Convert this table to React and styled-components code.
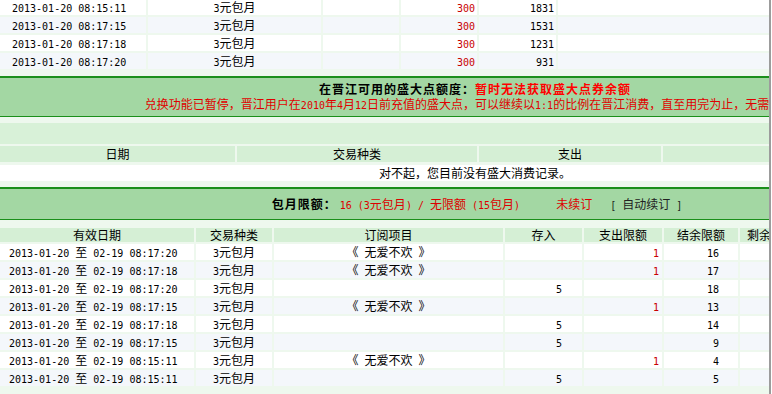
import React from 'react';
import styled, { createGlobalStyle } from 'styled-components';

const GlobalStyle = createGlobalStyle`
  html, body { margin: 0; padding: 0; background: #fff; overflow: hidden; }
  body {
    font-family: "Noto Sans CJK SC", sans-serif;
    font-size: 12px;
    color: #000;
  }
`;

const C = {
  dark: '#1a8f1a',
  band: '#a3d7a3',
  bar: '#d8f1d8',
  gap: '#eef8ee',
  head: '#d5efd5',
  alt: '#f4f7fb',
};

const Latin = styled.span`
  font-family: "DejaVu Sans Mono", monospace;
  font-size: 10px;
`;

function T({ children }) {
  const s = String(children ?? '');
  const parts = s.split(/([\x20-\x7e]+)/).filter(Boolean);
  return parts.map((p, i) =>
    /^[\x20-\x7e]+$/.test(p) ? <Latin key={i}>{p}</Latin> : <React.Fragment key={i}>{p}</React.Fragment>
  );
}

const Frame = styled.div`
  width: 769px;
  height: 394px;
  overflow: hidden;
  border-right: 2px solid #9c9c9c;
`;

const Page = styled.div`
  width: 950px;
  margin-top: -1px;
`;

const Grid = styled.div`
  display: grid;
  grid-template-columns: ${p => p.$cols};
  gap: 2px;
  background: ${C.gap};
  padding: ${p => p.$pad || '0'};
`;

const Cell = styled.div`
  height: ${p => p.$h || 16}px;
  line-height: ${p => p.$h || 16}px;
  background: ${p => p.$bg || '#fff'};
  text-align: ${p => p.$align || 'center'};
  padding: 0 ${p => p.$pr || 0}px 0 ${p => p.$pl || 0}px;
  color: ${p => (p.$red ? '#c80000' : '#000')};
  white-space: pre;
`;

const Band = styled.div`
  background: ${C.band};
  border-top: 2px solid ${C.dark};
  border-bottom: 1px solid ${C.dark};
  height: ${p => p.$h}px;
  padding-top: ${p => p.$pt || 0}px;
  line-height: ${p => p.$lh}px;
  text-align: center;
  white-space: pre;
`;

const Line = styled.div`
  display: flex;
  justify-content: center;
  align-items: baseline;
  padding-left: ${p => p.$pl || 0}px;
`;

const Strong = styled.span`
  font-weight: bold;
  letter-spacing: 1px;
  color: ${p => (p.$red ? '#ff0000' : '#000')};
`;

const Note = styled.span`
  color: ${p => p.$color || '#000'};
  margin-left: ${p => p.$ml || 0}px;
`;

const Section = styled.div`
  display: flex;
  flex-direction: column;
  gap: 2px;
  background: ${C.gap};
  padding: ${p => p.$pad};
`;

const Bar = styled.div`
  height: 21px;
  background: ${C.bar};
`;

const Message = styled.div`
  height: 16px;
  line-height: 16px;
  margin-top: 1px;
  background: #fff;
  text-align: center;
`;

const topRows = [
  ['2013-01-20 08:15:11', '1831'],
  ['2013-01-20 08:17:15', '1531'],
  ['2013-01-20 08:17:18', '1231'],
  ['2013-01-20 08:17:20', '931'],
];

const subRows = [
  ['08:17:20', true, '', '1', '16'],
  ['08:17:18', true, '', '1', '17'],
  ['08:17:20', false, '5', '', '18'],
  ['08:17:15', true, '', '1', '13'],
  ['08:17:18', false, '5', '', '14'],
  ['08:17:15', false, '5', '', '9'],
  ['08:15:11', true, '', '1', '4'],
  ['08:15:11', false, '5', '', '5'],
];

const subHeads = ['有效日期', '交易种类', '订阅项目', '存入', '支出限额', '结余限额', '剩余天数', ''];

export default function App() {
  return (
    <>
      <GlobalStyle />
      <Frame>
        <Page>
          <Grid $cols="146px 173px 76px 76px 77px 1fr" $pad="0 0 7px 0">
            {topRows.map(([date, bal], i) => {
              const bg = i % 2 ? C.alt : '#fff';
              return (
                <React.Fragment key={i}>
                  <Cell $bg={bg} $align="left" $pl={12}><T>{date}</T></Cell>
                  <Cell $bg={bg}><T>3元包月</T></Cell>
                  <Cell $bg={bg} />
                  <Cell $bg={bg} $align="right" $pr={2} $red><T>300</T></Cell>
                  <Cell $bg={bg} $align="right" $pr={2}><T>{bal}</T></Cell>
                  <Cell $bg={bg} />
                </React.Fragment>
              );
            })}
          </Grid>

          <Band $h={35} $pt={3} $lh={15}>
            <Line>
              <Strong>在晋江可用的盛大点额度：</Strong>
              <Strong $red>暂时无法获取盛大点券余额</Strong>
            </Line>
            <Line>
              <Note $color="#e00000">
                <T>兑换功能已暂停，晋江用户在2010年4月12日前充值的盛大点，可以继续以1:1的比例在晋江消费，直至用完为止，无需兑换。</T>
              </Note>
            </Line>
          </Band>

          <Section $pad="6px 0">
            <Bar />
            <Grid $cols="235px 240px 182px 1fr">
              {['日期', '交易种类', '支出', ''].map((h, i) => (
                <Cell key={i} $h={16} $bg={C.head}>{h}</Cell>
              ))}
            </Grid>
            <Message>对不起，您目前没有盛大消费记录。</Message>
          </Section>

          <Band $h={30} $lh={30}>
            <Line $pl={4}>
              <Strong>包月限额：</Strong>
              <Note $color="#dd0000" $ml={3}><T>16 (3元包月) / 无限额 (15包月)</T></Note>
              <Note $color="#dd0000" $ml={36}>未续订</Note>
              <Note $color="#222" $ml={18}><T>[ 自动续订 ]</T></Note>
            </Line>
          </Band>

          <Grid $cols="194px 76px 229px 77px 78px 74px 62px 1fr" $pad="8px 0 8px 0">
            {subHeads.map((h, i) => (
              <Cell key={i} $h={14} $bg={C.head}>{h}</Cell>
            ))}
            {subRows.map(([time, sub, inc, out, rest], i) => {
              const bg = i % 2 ? C.alt : '#fff';
              return (
                <React.Fragment key={i}>
                  <Cell $bg={bg} $align="left" $pl={9}><T>{`2013-01-20 至 02-19 ${time}`}</T></Cell>
                  <Cell $bg={bg}><T>3元包月</T></Cell>
                  <Cell $bg={bg}><T>{sub ? '《 无爱不欢 》' : ''}</T></Cell>
                  <Cell $bg={bg} $align="right" $pr={20}><T>{inc}</T></Cell>
                  <Cell $bg={bg} $align="right" $pr={3} $red><T>{out}</T></Cell>
                  <Cell $bg={bg} $align="right" $pr={19}><T>{rest}</T></Cell>
                  <Cell $bg={bg} />
                  <Cell $bg={bg} />
                </React.Fragment>
              );
            })}
          </Grid>
        </Page>
      </Frame>
    </>
  );
}
